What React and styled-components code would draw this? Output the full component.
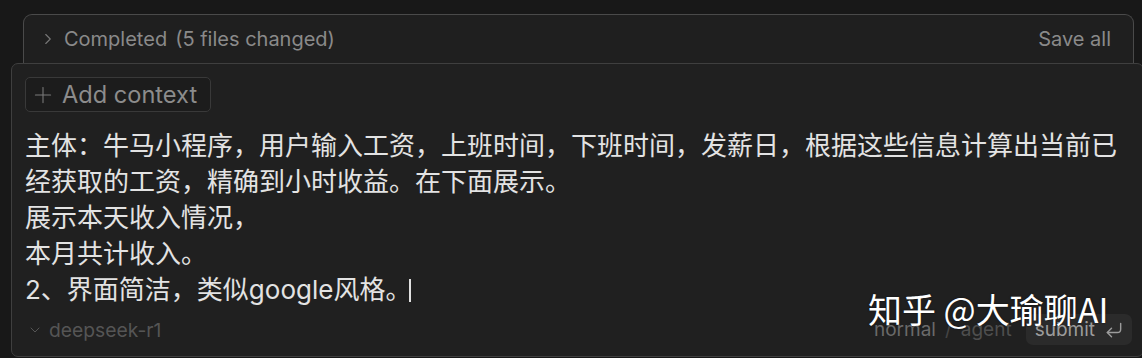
import React from "react";
import styled, { createGlobalStyle } from "styled-components";
import { ChevronRight, ChevronDown, Plus, CornerDownLeft } from "lucide-react";

const Global = createGlobalStyle`
  html, body { margin: 0; padding: 0; background: #181818; overflow: hidden; }
  body { font-family: Inter, "Noto Sans CJK SC", sans-serif; }
`;

const Page = styled.div`
  width: 1142px;
  height: 358px;
  padding-top: 14px;
  box-sizing: border-box;
  position: relative;
  display: flex;
  flex-direction: column;
`;

const StatusBar = styled.div`
  margin-left: 23px;
  width: 1111px;
  height: 49px;
  box-sizing: border-box;
  border: 1.5px solid #4a4a4a;
  border-bottom: none;
  border-radius: 9px 9px 0 0;
  background: #1f1f1f;
  display: flex;
  align-items: center;
  padding: 0 22px 0 15px;
  color: #8a8a8a;
  font-size: 20px;
`;

const StatusLeft = styled.div`
  display: flex;
  align-items: center;
  gap: 7px;
  flex: 1;
`;

const Dim = styled.span`
  margin-left: 8px;
`;

const Composer = styled.div`
  margin-left: 11px;
  width: 1133px;
  height: 294px;
  box-sizing: border-box;
  border: 1.5px solid #3f3f3f;
  border-radius: 7px;
  background: #202020;
  padding: 13px 14px 0 13px;
  display: flex;
  flex-direction: column;
`;

const ContextButton = styled.div`
  align-self: flex-start;
  display: flex;
  align-items: center;
  gap: 6px;
  height: 35px;
  box-sizing: border-box;
  padding: 0 13px 0 4px;
  border: 1.5px solid #393939;
  border-radius: 5px;
  background: #1c1c1c;
  color: #8c8c8c;
  font-size: 23.6px;
`;

const Prompt = styled.div`
  margin-top: 16px;
  font-size: 26px;
  line-height: 36px;
  color: #e3e3e3;
  white-space: pre-wrap;
`;

const Caret = styled.span`
  display: inline-block;
  width: 2px;
  height: 23px;
  margin-left: -2px;
  background: #e0e0e0;
  vertical-align: -3px;
`;

const Footer = styled.div`
  margin-top: 6px;
  display: flex;
  align-items: center;
  height: 31px;
`;

const Model = styled.div`
  display: flex;
  align-items: center;
  gap: 6px;
  flex: 1;
  padding-left: 2px;
  color: #555;
  font-size: 19.3px;
`;

const Mode = styled.span`
  font-size: 19px;
  color: ${(p) => (p.$active ? "#6a6a6a" : "#4e4e4e")};
`;

const Slash = styled.span`
  font-size: 19px;
  color: #454545;
  margin: 0 9px;
`;

const Submit = styled.div`
  margin-left: 14px;
  display: flex;
  align-items: center;
  gap: 9px;
  height: 31px;
  padding: 0 8px 0 9px;
  border-radius: 7px;
  background: #2b2b2b;
  color: #9c9c9c;
  font-size: 19px;
  margin-right: -3px;
`;

const Watermark = styled.div`
  position: absolute;
  left: 868px;
  top: 285px;
  font-family: "Noto Sans CJK SC", sans-serif;
  font-size: 34px;
  line-height: 48px;
  color: #ffffff;
  text-shadow: 0 0 2px rgba(0, 0, 0, 0.6);
  white-space: pre;
`;

const lines = [
  "主体：牛马小程序，用户输入工资，上班时间，下班时间，发薪日，根据这些信息计算出当前已",
  "经获取的工资，精确到小时收益。在下面展示。",
  "展示本天收入情况，",
  "本月共计收入。",
];

export default function App() {
  return (
    <>
      <Global />
      <Page>
        <StatusBar>
          <StatusLeft>
            <ChevronRight size={18} strokeWidth={1.5} color="#777" />
            <span>
              Completed<Dim>(5 files changed)</Dim>
            </span>
          </StatusLeft>
          <span>Save all</span>
        </StatusBar>
        <Composer>
          <ContextButton>
            <Plus size={26} strokeWidth={1} color="#7a7a7a" />
            Add context
          </ContextButton>
          <Prompt>
            {lines.map((l) => (
              <div key={l}>{l}</div>
            ))}
            <div>
              2、界面简洁，类似google风格。
              <Caret />
            </div>
          </Prompt>
          <Footer>
            <Model>
              <ChevronDown size={16} strokeWidth={1.5} color="#555" />
              deepseek-r1
            </Model>
            <Mode $active>normal</Mode>
            <Slash>/</Slash>
            <Mode>agent</Mode>
            <Submit>
              submit
              <CornerDownLeft size={20} strokeWidth={1.7} color="#9c9c9c" />
            </Submit>
          </Footer>
        </Composer>
        <Watermark>知乎 @大瑜聊AI</Watermark>
      </Page>
    </>
  );
}
